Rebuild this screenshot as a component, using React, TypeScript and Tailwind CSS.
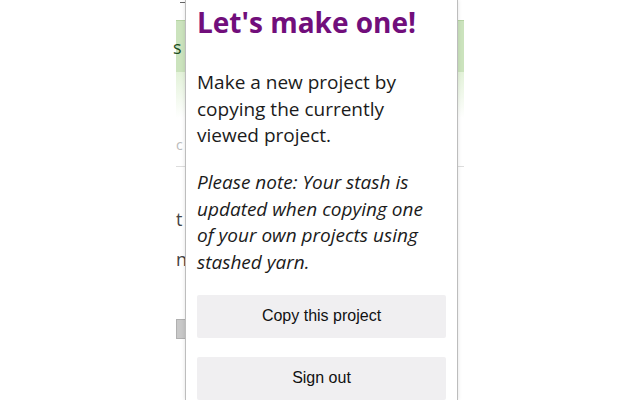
import React from "react";

export default function App() {
  return (
    <div className="relative w-[640px] h-[400px] overflow-hidden bg-white" style={{ fontFamily: "'Open Sans', sans-serif" }}>
      {/* background page */}
      <div className="mx-auto w-[288px] h-full flex flex-col bg-white">
        <div className="h-[20px] relative">
          <div className="absolute left-[4px] top-[2px] w-[5px] h-px bg-[#666]" />
        </div>
        <div className="h-[52px] bg-[#cbe3bd] border-t border-[#b5d3a3] flex items-center">
          <span className="text-[18px] text-[#1d4d1d] leading-none -ml-[3px]">s</span>
        </div>
        <div className="h-[46px] bg-gradient-to-b from-[#e3f2d9] to-white" />
        <div className="h-[48px] flex items-end pb-[14px]">
          <span className="text-[14px] text-[#bbb] leading-none">c</span>
        </div>
        <div className="h-px bg-[#ddd]" />
        <div className="pt-[32px] text-[18px] leading-[40px] text-[#444]">
          <div>t</div>
          <div>n</div>
        </div>
        <div className="mt-[40px] h-[20px] w-[12px] bg-[#c8c8c8] border border-[#b0b0b0]" />
      </div>

      {/* popup */}
      <div className="absolute left-[185px] top-0 w-[273px] h-[400px] bg-white border-x border-[#bdbdbd] shadow-[0_0_4px_rgba(0,0,0,0.12)] px-[11px]">
        <h1 className="text-[28px] font-bold leading-[40px] text-[#710e7b] mt-[2px]">
          Let's make one!
        </h1>
        <p className="mt-[27px] text-[19px] leading-[26.6px] text-[#1b1b1b]">
          Make a new project by copying the currently viewed project.
        </p>
        <p className="mt-[20px] pr-[8px] text-[19px] leading-[26.8px] italic text-[#1b1b1b]">
          Please note: Your stash is updated when copying one of your own projects using stashed yarn.
        </p>
        <div className="mt-[19px] flex flex-col gap-[19px]">
          <button className="h-[43px] w-full bg-[#f0eff1] rounded-[2px] text-[16px] text-[#111]" style={{ fontFamily: "'Liberation Sans', Arial, sans-serif" }}>
            Copy this project
          </button>
          <button className="h-[43px] w-full bg-[#f0eff1] rounded-[2px] text-[16px] text-[#111]" style={{ fontFamily: "'Liberation Sans', Arial, sans-serif" }}>
            Sign out
          </button>
        </div>
      </div>
    </div>
  );
}
